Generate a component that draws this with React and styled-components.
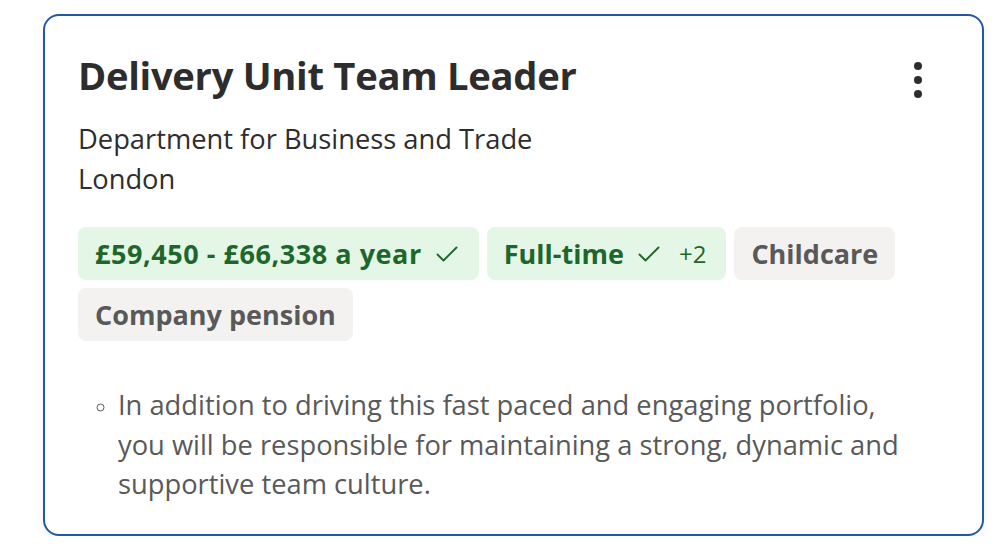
import React from "react";
import styled, { createGlobalStyle } from "styled-components";

const Global = createGlobalStyle`
  html, body { margin: 0; padding: 0; background: #ffffff; }
  body { font-family: "Open Sans", "Noto Sans", sans-serif; }
`;

const Page = styled.div`
  padding: 14px 0 0 43px;
`;

const Card = styled.div`
  box-sizing: border-box;
  width: 941px;
  height: 522px;
  border: 2px solid #2557a7;
  border-radius: 16px;
  box-shadow: 0 4px 12px rgba(0, 0, 0, 0.06);
  padding: 34px 33px 0 33px;
  background: #fff;
`;

const Header = styled.div`
  display: flex;
  justify-content: space-between;
  align-items: flex-start;
`;

const Title = styled.h2`
  margin: 0;
  font-size: 38.2px;
  line-height: 50px;
  font-weight: 700;
  color: #2d2d2d;
  letter-spacing: -0.3px;
`;

const Kebab = styled.button`
  border: 0;
  background: none;
  padding: 0;
  margin: 10px 21px 0 0;
  width: 20px;
  height: 40px;
  display: flex;
  align-items: center;
  justify-content: center;
`;

const Company = styled.div`
  margin-top: 19px;
  font-size: 27.3px;
  line-height: 40px;
  color: #2d2d2d;
`;

const Tags = styled.div`
  margin-top: 28px;
  display: flex;
  flex-wrap: wrap;
  gap: 8px 8px;
`;

const Tag = styled.div`
  display: flex;
  align-items: center;
  height: 53px;
  box-sizing: border-box;
  padding: 0 17px;
  border-radius: 8px;
  font-size: 27px;
  font-weight: 700;
  background: ${(p) => (p.$green ? "#e4f7e6" : "#f3f2f1")};
  color: ${(p) => (p.$green ? "#1f662c" : "#595959")};
`;

const Money = styled.span`
  letter-spacing: 0.55px;
`;

const Check = styled.svg`
  margin-left: 14px;
  margin-right: 4px;
  width: 22px;
  height: 16px;
`;

const More = styled.span`
  margin-left: 15px;
  margin-right: 3px;
  font-weight: 400;
  font-size: 24px;
`;

const Snippet = styled.ul`
  margin: 44px 30px 0 0;
  padding: 0 0 0 40px;
  list-style: circle;
  color: #595959;
  font-size: 27.3px;
  line-height: 39.5px;
  li::marker { font-size: 20px; }
`;

const CheckIcon = () => (
  <Check viewBox="0 0 22 16" fill="none" stroke="currentColor" strokeWidth="1.9" strokeLinecap="round" strokeLinejoin="round">
    <path d="M1.5 8.5l6 6L20.5 1.5" />
  </Check>
);

export default function App() {
  return (
    <>
      <Global />
      <Page>
        <Card>
          <Header>
            <Title>Delivery Unit Team Leader</Title>
            <Kebab aria-label="More">
              <svg width="10" height="40" viewBox="0 0 10 40">
                <circle cx="5" cy="6" r="4" fill="#2d2d2d" />
                <circle cx="5" cy="20" r="4" fill="#2d2d2d" />
                <circle cx="5" cy="34" r="4" fill="#2d2d2d" />
              </svg>
            </Kebab>
          </Header>
          <Company>
            Department for Business and Trade
            <br />
            London
          </Company>
          <Tags>
            <Tag $green>
              <Money>£59,450 - £66,338 a year</Money>
              <CheckIcon />
            </Tag>
            <Tag $green>
              Full-time
              <CheckIcon />
              <More>+2</More>
            </Tag>
            <Tag>Childcare</Tag>
            <Tag>Company pension</Tag>
          </Tags>
          <Snippet>
            <li>
              In addition to driving this fast paced and engaging portfolio, you will be responsible for maintaining a strong, dynamic and supportive team culture.
            </li>
          </Snippet>
        </Card>
      </Page>
    </>
  );
}
